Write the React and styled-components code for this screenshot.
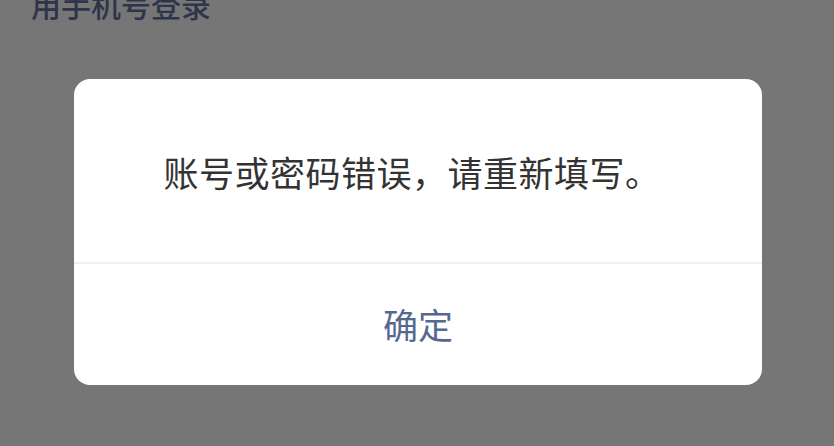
import React from "react";
import styled, { createGlobalStyle } from "styled-components";

const GlobalStyle = createGlobalStyle`
  html, body {
    margin: 0;
    padding: 0;
    background: #767676;
    overflow: hidden;
  }
  body {
    font-family: "Noto Sans CJK SC", "Noto Sans", sans-serif;
  }
`;

const Screen = styled.div`
  width: 834px;
  height: 446px;
  display: flex;
  flex-direction: column;
  overflow: hidden;
  background: #767676;
`;

const PageTitle = styled.div`
  margin: -16px 0 0 31px;
  font-size: 30px;
  line-height: 40px;
  font-weight: 500;
  color: #2e354a;
`;

const Dialog = styled.div`
  margin: 55px 0 0 74px;
  width: 688px;
  background: #ffffff;
  border-radius: 16px;
  display: flex;
  flex-direction: column;
  overflow: hidden;
`;

const Message = styled.div`
  height: 185px;
  display: flex;
  align-items: center;
  justify-content: center;
  padding: 2px 12px 0 0;
  box-sizing: border-box;
  font-size: 35px;
  letter-spacing: 0.5px;
  color: #333333;
  border-bottom: 2px solid #efefef;
`;

const ConfirmButton = styled.button`
  height: 121px;
  border: none;
  background: transparent;
  font-family: inherit;
  font-size: 35px;
  color: #56688f;
  padding: 0 0 2px;
  cursor: pointer;
`;

export default function App() {
  return (
    <Screen>
      <GlobalStyle />
      <PageTitle>用手机号登录</PageTitle>
      <Dialog>
        <Message>账号或密码错误，请重新填写。</Message>
        <ConfirmButton>确定</ConfirmButton>
      </Dialog>
    </Screen>
  );
}
